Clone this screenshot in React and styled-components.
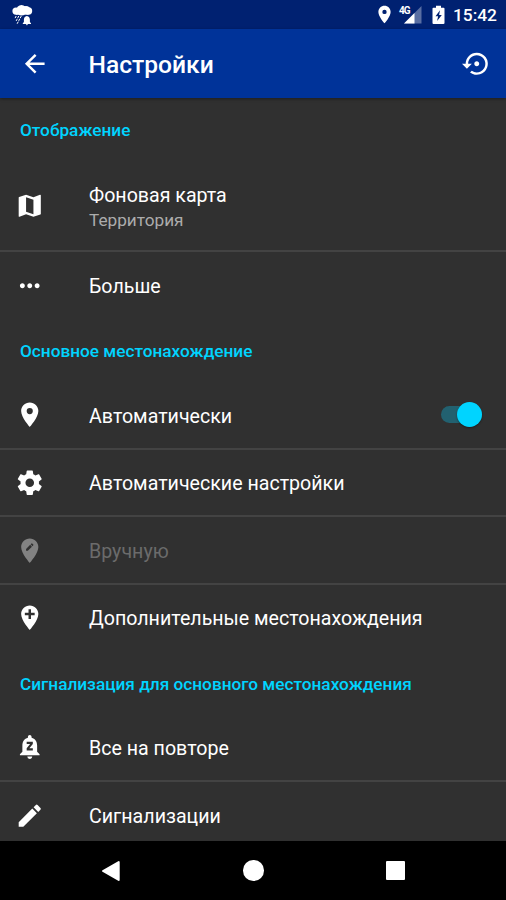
import React, { useState } from 'react';
import styled, { createGlobalStyle } from 'styled-components';
import {
  MdAddLocation,
  MdArrowBack,
  MdEdit,
  MdEditLocation,
  MdLocationOn,
  MdMap,
  MdMoreHoriz,
  MdNotificationsPaused,
  MdSettingsBackupRestore,
} from 'react-icons/md';

const GearIcon = () => (
  <svg viewBox="0 0 24 24" width="1em" height="1em" fill="currentColor">
    <path d="M12 15.5A3.5 3.5 0 0 1 8.5 12 3.5 3.5 0 0 1 12 8.5a3.5 3.5 0 0 1 3.5 3.5 3.5 3.5 0 0 1-3.5 3.5m7.43-2.53c.04-.32.07-.64.07-.97s-.03-.66-.07-1l2.11-1.63c.19-.15.24-.42.12-.64l-2-3.46c-.12-.22-.39-.31-.61-.22l-2.49 1c-.52-.39-1.06-.73-1.69-.98l-.37-2.65A.506.506 0 0 0 14 2h-4c-.25 0-.46.18-.5.42l-.37 2.65c-.63.25-1.17.59-1.69.98l-2.49-1c-.22-.09-.49 0-.61.22l-2 3.46c-.13.22-.07.49.12.64L4.57 11c-.04.34-.07.67-.07 1s.03.65.07.97l-2.11 1.66c-.19.15-.25.42-.12.64l2 3.46c.12.22.39.3.61.22l2.49-1.01c.52.4 1.06.74 1.69.99l.37 2.65c.04.24.25.42.5.42h4c.25 0 .46-.18.5-.42l.37-2.65c.63-.26 1.17-.59 1.69-.99l2.49 1.01c.22.08.49 0 .61-.22l2-3.46c.12-.22.07-.49-.12-.64z" />
  </svg>
);

const RainAlertIcon = () => (
  <svg viewBox="0 0 21 21" width="21" height="21" fill="#fff">
    <circle cx="4" cy="6.1" r="3.6" />
    <circle cx="9.5" cy="5.2" r="5.2" />
    <circle cx="14" cy="5" r="4" />
    <circle cx="16.5" cy="6" r="3.7" />
    <path d="M4 5h12.5v4.7H4z" />
    <path
      d="M4.2 11l-1.4 2.6M6.8 11l-2.9 5.4M9.3 11l-4.3 8"
      fill="none"
      stroke="#fff"
      strokeWidth="1"
      strokeDasharray="2.4 0.8"
    />
    <path d="M14.9 11c-2.1.2-3 1.9-3 3.7v2.3l-1.1 1.2v.8h8.2v-.8L17.9 17v-2.3c0-1.8-.9-3.5-3-3.7zM13.9 19.3h2a1 1 0 0 1-2 0z" />
  </svg>
);

const SignalIcon = () => (
  <svg viewBox="0 0 18 18" width="18" height="18">
    <path d="M17.5 0v17.5H0z" fill="#fff" opacity="0.35" />
    <path d="M10.5 7v10.5H0z" fill="#fff" />
  </svg>
);

const BatteryIcon = () => (
  <svg viewBox="0 0 13 20" width="13" height="20">
    <path d="M4 .7h5v2h2.6c.5 0 .9.4.9.9v14.4c0 .5-.4.9-.9.9H1.4c-.5 0-.9-.4-.9-.9V3.600c0-.5.4-.9.9-.9H4z" fill="#fff" />
    <path d="M8 5.3L3.5 11.3h2.600l-1 4.800 4.700-6.200H7.100z" fill="#002171" />
  </svg>
);

const sections = [
  {
    title: 'Отображение',
    offset: 1,
    items: [
      { icon: MdMap, label: 'Фоновая карта', summary: 'Территория', height: 89 },
      { icon: MdMoreHoriz, label: 'Больше', height: 68, line: 2 },
    ],
  },
  {
    title: 'Основное местонахождение',
    offset: 2,
    items: [
      { icon: MdLocationOn, label: 'Автоматически', toggle: true, height: 67 },
      { icon: GearIcon, label: 'Автоматические настройки', height: 67 },
      { icon: MdEditLocation, label: 'Вручную', disabled: true, height: 68, line: 2 },
      { icon: MdAddLocation, label: 'Дополнительные местонахождения', height: 67 },
    ],
  },
  {
    title: 'Сигнализация для основного местонахождения',
    offset: 3,
    items: [
      { icon: MdNotificationsPaused, label: 'Все на повторе', height: 67 },
      { icon: MdEdit, label: 'Сигнализации', height: 68, line: 2 },
    ],
  },
];

const App = () => {
  const [auto, setAuto] = useState(true);

  return (
    <Screen>
      <GlobalStyle />
      <StatusBar>
        <RainAlertIcon />
        <StatusIcons>
          <MdLocationOn size={21} />
          <Network>
            <NetworkType>4G</NetworkType>
            <SignalIcon />
          </Network>
          <BatteryIcon />
          <Clock>15:42</Clock>
        </StatusIcons>
      </StatusBar>

      <AppBar>
        <IconButton aria-label="Назад">
          <MdArrowBack />
        </IconButton>
        <Title>Настройки</Title>
        <IconButton aria-label="Сбросить">
          <MdSettingsBackupRestore />
        </IconButton>
      </AppBar>

      <List>
        {sections.map((section) => (
          <section key={section.title}>
            <SectionTitle $offset={section.offset}>{section.title}</SectionTitle>
            {section.items.map(({ icon: Icon, label, summary, toggle, disabled, height, line }) => (
              <Row key={label} $height={height} $line={line} $disabled={disabled}>
                <RowIcon $disabled={disabled}>
                  <Icon />
                </RowIcon>
                <RowText>
                  <Label>{label}</Label>
                  {summary && <Summary>{summary}</Summary>}
                </RowText>
                {toggle && (
                  <Switch
                    role="switch"
                    aria-checked={auto}
                    aria-label={label}
                    $on={auto}
                    onClick={() => setAuto(!auto)}
                  >
                    <Thumb $on={auto} />
                  </Switch>
                )}
              </Row>
            ))}
          </section>
        ))}
      </List>

      <NavBar>
        <svg viewBox="0 0 20 22" width="20" height="22">
          <path d="M17.7 2v18L2 11z" fill="#fff" stroke="#fff" strokeWidth="2" strokeLinejoin="round" />
        </svg>
        <HomeDot />
        <RecentSquare />
      </NavBar>
    </Screen>
  );
};

const GlobalStyle = createGlobalStyle`
  body {
    margin: 0;
    background: #000;
  }
  svg {
    display: block;
    flex-shrink: 0;
  }
`;

const Screen = styled.div`
  width: 506px;
  height: 900px;
  display: flex;
  flex-direction: column;
  overflow: hidden;
  background: #303030;
  color: #fff;
  font-family: Roboto, "Noto Sans", sans-serif;
`;

const StatusBar = styled.div`
  height: 29px;
  flex-shrink: 0;
  box-sizing: border-box;
  padding: 0 9px 0 12px;
  display: flex;
  align-items: center;
  justify-content: space-between;
  background: #002171;

  > svg {
    margin-top: 1px;
  }
`;

const StatusIcons = styled.div`
  display: flex;
  align-items: center;
`;

const Network = styled.div`
  display: flex;
  margin: 0 10px 0 4px;
`;

const NetworkType = styled.span`
  width: 5px;
  font-size: 10px;
  line-height: 9px;
  font-weight: 700;
  letter-spacing: -0.9px;
  white-space: nowrap;
`;

const Clock = styled.span`
  margin-left: 8px;
  padding-top: 2px;
  font-size: 17.4px;
  line-height: 29px;
  font-weight: 500;
`;

const AppBar = styled.header`
  height: 69px;
  flex-shrink: 0;
  box-sizing: border-box;
  padding: 0 15px 0 20px;
  display: flex;
  align-items: center;
  background: #003399;
  box-shadow: 0 1px 3px rgba(0, 0, 0, 0.4);
  z-index: 1;
`;

const IconButton = styled.button`
  border: none;
  background: none;
  padding: 0;
  color: #fff;
  font-size: 29.5px;
  cursor: pointer;
`;

const Title = styled.h1`
  flex: 1;
  margin: 0 0 0 39px;
  padding-top: 2px;
  font-size: 24.6px;
  font-weight: 500;
`;

const List = styled.main`
  flex: 1;
  min-height: 0;
  overflow: hidden;
`;

const SectionTitle = styled.h2`
  height: 63px;
  box-sizing: border-box;
  margin: 0;
  padding: ${(props) => props.$offset}px 0 0 20px;
  font-size: 17.23px;
  line-height: 63px;
  font-weight: 500;
  color: #00d4ff;
`;

const RowText = styled.div`
  flex: 1;
  padding-top: 3px;
`;

const Row = styled.div`
  height: ${(props) => props.$height}px;
  box-sizing: border-box;
  padding: 0 24px 0 15px;
  display: flex;
  align-items: center;
  color: ${(props) => (props.$disabled ? '#6b6b6b' : '#fff')};

  & + & {
    border-top: ${(props) => (props.$line === 2 ? '2px solid #434343' : '1px solid #4a4a4a')};
  }

  ${SectionTitle} + & ${RowText} {
    padding-top: 5px;
  }
`;

const RowIcon = styled.div`
  width: 74px;
  padding-top: 1px;
  font-size: 29.5px;
  color: ${(props) => (props.$disabled ? '#828282' : '#fff')};
`;

const Label = styled.div`
  font-size: 19.63px;
  line-height: 24px;
`;

const Summary = styled.div`
  margin-top: 1px;
  font-size: 17.2px;
  line-height: 23px;
  color: #acacac;
`;

const Switch = styled.button`
  width: 41px;
  height: 17px;
  border: none;
  padding: 0;
  display: flex;
  align-items: center;
  justify-content: ${(props) => (props.$on ? 'flex-end' : 'flex-start')};
  border-radius: 9px;
  background: ${(props) => (props.$on ? '#226170' : '#5c5c5c')};
  cursor: pointer;
`;

const Thumb = styled.span`
  width: 25px;
  height: 25px;
  flex-shrink: 0;
  border-radius: 50%;
  background: ${(props) => (props.$on ? '#00d4ff' : '#bdbdbd')};
  box-shadow: 0 1px 2px rgba(0, 0, 0, 0.4);
`;

const NavBar = styled.nav`
  height: 59px;
  flex-shrink: 0;
  box-sizing: border-box;
  padding-left: 101px;
  display: flex;
  align-items: center;
  gap: 122px;
  background: #000;
`;

const HomeDot = styled.div`
  width: 20.5px;
  height: 20.5px;
  border-radius: 50%;
  background: #fff;
`;

const RecentSquare = styled.div`
  width: 19px;
  height: 19px;
  border-radius: 1px;
  background: #fff;
`;

export default App;
